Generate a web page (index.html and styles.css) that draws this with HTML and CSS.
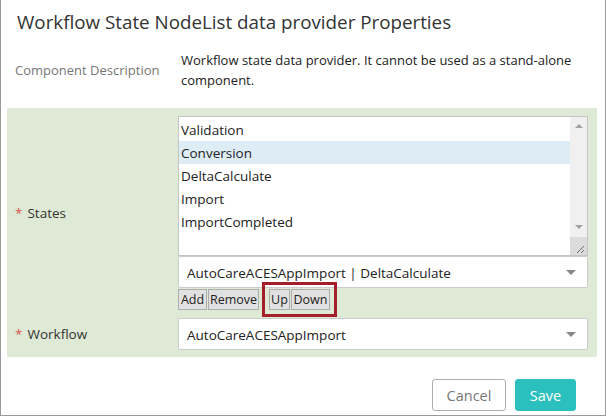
FILE: index.html
```html
<!DOCTYPE html>
<html>
<head>
<meta charset="utf-8">
<link rel="stylesheet" href="styles.css">
</head>
<body>
<div class="dialog">
  <div class="title">Workflow State NodeList data provider Properties</div>
  <div class="desc-row">
    <div class="desc-label">Component Description</div>
    <div class="desc-text">Workflow state data provider. It cannot be used as a stand-alone component.</div>
  </div>
  <div class="form">
    <div class="field">
      <div class="label"><span class="req">*</span>States</div>
      <div class="control">
        <div class="listbox">
          <div class="items">
            <div class="item">Validation</div>
            <div class="item selected">Conversion</div>
            <div class="item">DeltaCalculate</div>
            <div class="item">Import</div>
            <div class="item">ImportCompleted</div>
          </div>
          <div class="scrollbar">
            <div class="track">
              <span class="arrow-up"></span>
              <span class="arrow-down"></span>
            </div>
            <div class="grip">
              <svg width="17" height="18" viewBox="0 0 17 18"><path d="M7 16 L14 9 M11 16 L14 13" stroke="#6f6f6f" stroke-width="1" fill="none"/></svg>
            </div>
          </div>
        </div>
        <div class="select">AutoCareACESAppImport | DeltaCalculate<span class="caret"></span></div>
        <div class="btns">
          <button class="btn btn-add">Add</button>
          <button class="btn btn-remove">Remove</button>
          <span class="hl">
            <button class="btn btn-up">Up</button>
            <button class="btn btn-down">Down</button>
          </span>
        </div>
      </div>
    </div>
    <div class="field">
      <div class="label"><span class="req">*</span>Workflow</div>
      <div class="control">
        <div class="select">AutoCareACESAppImport<span class="caret"></span></div>
      </div>
    </div>
  </div>
  <div class="footer">
    <button class="cancel">Cancel</button>
    <button class="save">Save</button>
  </div>
</div>
</body>
</html>
```

FILE: styles.css
```css
* { box-sizing: border-box; }
html, body { margin: 0; padding: 0; background: #fff; }
body { font-family: "Open Sans", "Noto Sans", sans-serif; color: #333; }

.dialog {
  width: 606px;
  height: 416px;
  border-left: 1px solid #9a9a9a;
  border-right: 1px solid #9a9a9a;
  border-bottom: 1px solid #9a9a9a;
  background: #fff;
}

.title {
  padding: 8px 0 0 16px;
  font-size: 18.8px;
  line-height: 28px;
  color: #333;
}

.desc-row {
  display: grid;
  grid-template-columns: 166px 405px;
  align-items: center;
  margin-top: 14px;
  padding-left: 14px;
}
.desc-label { font-size: 13px; color: #777; }
.desc-text { font-size: 13px; line-height: 20px; color: #222; }

.form {
  margin: 18px 8px 0 6px;
  background: #dfead6;
  padding: 8px 9px 7px 8px;
  display: flex;
  flex-direction: column;
  gap: 8px;
}
.field {
  display: grid;
  grid-template-columns: 163px 410px;
  align-items: center;
}
.label { font-size: 13.5px; color: #333; }
.req { color: #d9534f; margin-right: 5px; }

.control { display: flex; flex-direction: column; }

.listbox {
  height: 140px;
  border: 1px solid #c4c4c4;
  background: #fff;
  display: flex;
}
.items { flex: 1; padding-top: 1px; }
.item {
  height: 23px;
  line-height: 24px;
  padding-left: 2px;
  font-size: 13.5px;
  color: #222;
}
.item.selected { background: #deedf5; }

.scrollbar {
  width: 17px;
  display: flex;
  flex-direction: column;
  background: #f0f0f0;
}
.track {
  flex: 1;
  display: flex;
  flex-direction: column;
  justify-content: space-between;
  align-items: center;
  padding: 7px 0 8px;
}
.arrow-up, .arrow-down {
  width: 0; height: 0;
  border-left: 4px solid transparent;
  border-right: 4px solid transparent;
}
.arrow-up { border-bottom: 4px solid #a3a3a3; }
.arrow-down { border-top: 4px solid #a3a3a3; }
.grip { height: 18px; background: #dcdcdc; display: flex; }

.select {
  position: relative;
  height: 32px;
  border: 1px solid #ccc;
  border-radius: 2px;
  background: #fff;
  padding: 2px 0 0 8px;
  font-size: 13.5px;
  line-height: 28px;
  color: #222;
}
.caret {
  position: absolute;
  right: 11px;
  top: 13px;
  width: 0; height: 0;
  border-left: 5px solid transparent;
  border-right: 5px solid transparent;
  border-top: 5px solid #888;
}

.btns {
  display: flex;
  margin-top: 1px;
  gap: 1px;
}
.btn {
  height: 21px;
  padding: 0;
  font-family: "Open Sans", "Noto Sans", sans-serif;
  font-size: 12.5px;
  line-height: 19px;
  text-align: center;
  color: #222;
  background: #e1e1e1;
  border: 1px solid #adadad;
  border-radius: 0;
}
.btn-add { width: 29px; }
.btn-remove { width: 51px; }
.btn-up { width: 21px; }
.btn-down { width: 39px; }
.hl {
  position: relative;
  display: flex;
  gap: 1px;
  margin-left: 9px;
}
.hl::after {
  content: "";
  position: absolute;
  left: -7px;
  right: -7px;
  top: -7px;
  bottom: -7px;
  border: 3px solid #a31f2a;
}

.footer {
  display: flex;
  justify-content: flex-end;
  gap: 9px;
  margin-top: 22px;
  padding-right: 29px;
}
.cancel, .save {
  height: 32px;
  font-family: "Open Sans", "Noto Sans", sans-serif;
  font-size: 14.5px;
  border-radius: 3px;
}
.cancel {
  width: 74px;
  background: #fff;
  border: 1px solid #adadad;
  color: #777;
}
.save {
  width: 61px;
  background: #2bbfbd;
  border: 1px solid #2bbfbd;
  color: #fff;
}
```
